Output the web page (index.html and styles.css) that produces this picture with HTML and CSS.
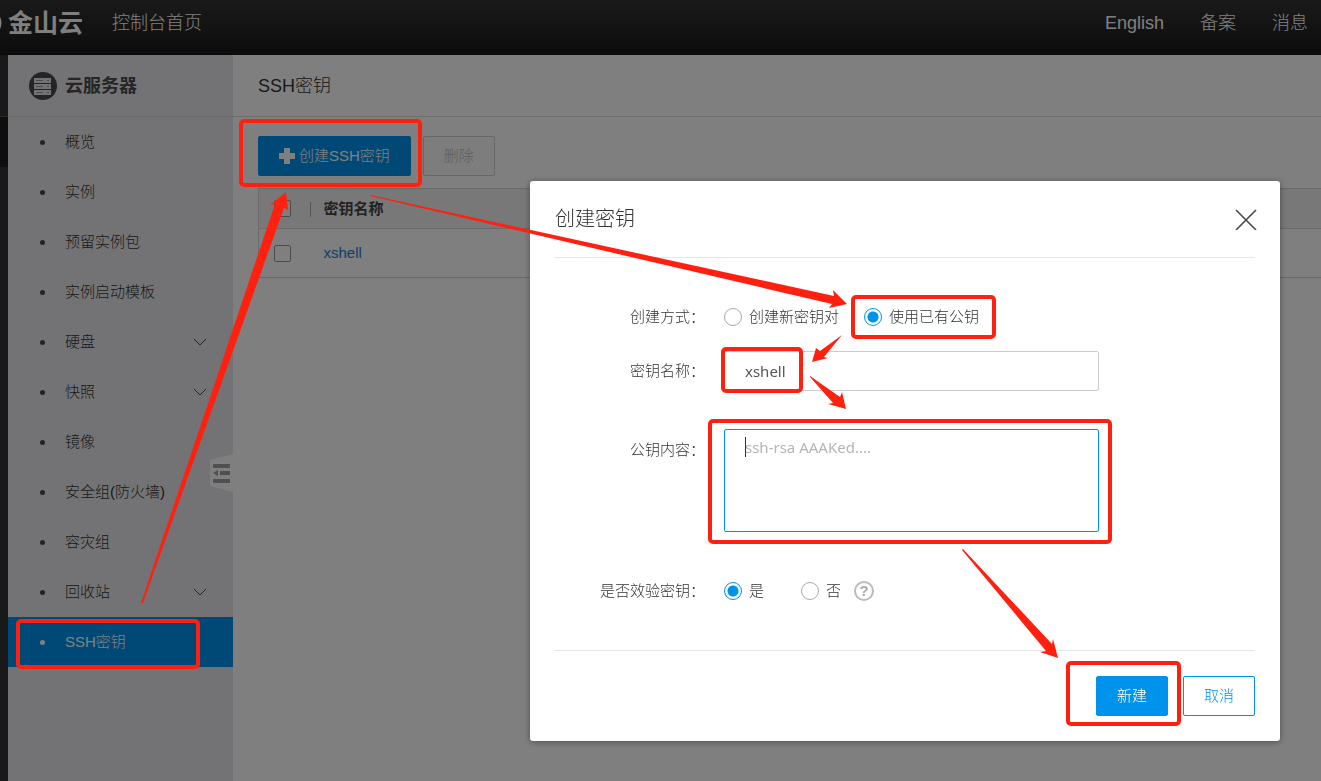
FILE: index.html
```html
<!DOCTYPE html>
<html lang="zh-CN">
<head>
  <meta charset="utf-8">
  <title>SSH密钥 - 金山云控制台</title>
  <meta name="viewport" content="width=device-width, initial-scale=1.0">
  <link rel="stylesheet" href="styles.css">
</head>
<body>
  <header class="topbar">
    <svg class="logo-ring" width="4" height="30" viewBox="0 0 4 30">
      <circle cx="-12" cy="15" r="12" fill="none" stroke="#fff" stroke-width="3"/>
    </svg>
    <a class="logo" href="#">金山云</a>
    <a class="home" href="#">控制台首页</a>
    <nav class="topnav">
      <a href="#">English</a>
      <a href="#">备案</a>
      <a href="#">消息</a>
    </nav>
  </header>

  <div class="layout">
    <div class="rail">
      <div class="rail-top"></div>
      <div class="rail-item"></div>
    </div>

    <aside class="sidebar">
      <div class="sidebar-title">
        <svg width="28" height="28" viewBox="0 0 28 28">
          <circle cx="14" cy="14" r="14" fill="#4a4a4a"/>
          <g fill="#e6e6ea">
            <rect x="5" y="6" width="17" height="5"/>
            <rect x="5" y="12" width="17" height="5"/>
            <rect x="5" y="18" width="17" height="5"/>
          </g>
          <path d="M7 8.500h7M18 8.500h2M7 14.500h7M18 14.500h2M7 20.500h7M18 20.500h2" stroke="#999"/>
        </svg>
        <h2>云服务器</h2>
      </div>
      <ul class="menu">
        <li><a href="#">概览</a></li>
        <li><a href="#">实例</a></li>
        <li><a href="#">预留实例包</a></li>
        <li><a href="#">实例启动模板</a></li>
        <li><a href="#">硬盘<svg class="arrow" width="14" height="8" viewBox="0 0 14 8"><path d="M1 1l6 6 6-6"/></svg></a></li>
        <li><a href="#">快照<svg class="arrow" width="14" height="8" viewBox="0 0 14 8"><path d="M1 1l6 6 6-6"/></svg></a></li>
        <li><a href="#">镜像</a></li>
        <li><a href="#">安全组(防火墙)</a></li>
        <li><a href="#">容灾组</a></li>
        <li><a href="#">回收站<svg class="arrow" width="14" height="8" viewBox="0 0 14 8"><path d="M1 1l6 6 6-6"/></svg></a></li>
        <li><a class="active" href="#">SSH密钥</a></li>
      </ul>
      <button class="collapse" type="button" aria-label="收起菜单">
        <svg width="23" height="38" viewBox="0 0 23 38">
          <path d="M0 6L23 0v38L0 32z" fill="#fff"/>
          <path d="M3 10h17v4H3zM10 17h10v4H10zM3 25h17v4H3zM3 19l5-3v6z" fill="#a0a0a0"/>
        </svg>
      </button>
    </aside>

    <main class="main">
      <h1>SSH密钥</h1>
      <div class="content">
        <div class="toolbar">
          <button class="btn primary create" type="button">
            <svg width="16" height="16" viewBox="0 0 16 16"><path d="M5 0h6v5h5v6h-5v5H5v-5H0V5h5z" fill="#fff"/></svg>
            创建SSH密钥
          </button>
          <button class="btn" type="button" disabled>删除</button>
        </div>
        <table class="keys">
          <thead>
            <tr>
              <th class="check"><input type="checkbox" aria-label="全选"></th>
              <th><span class="split"></span>密钥名称</th>
            </tr>
          </thead>
          <tbody>
            <tr>
              <td class="check"><input type="checkbox" aria-label="选择 xshell"></td>
              <td class="name"><a href="#">xshell</a></td>
            </tr>
          </tbody>
        </table>
      </div>
    </main>
  </div>

  <div class="mask">
    <form class="dialog" role="dialog" aria-labelledby="dialogTitle">
      <div class="dialog-head">
        <h3 id="dialogTitle">创建密钥</h3>
        <button class="close" type="button" aria-label="关闭">
          <svg width="22" height="22" viewBox="0 0 22 22"><path d="M1 2l20 20M21 2L1 22" stroke="#4a4a4a" stroke-width="1.600"/></svg>
        </button>
      </div>

      <div class="dialog-body">
        <div class="row">
          <span class="label">创建方式：</span>
          <label class="radio"><input type="radio" name="mode">创建新密钥对</label>
          <label class="radio"><input type="radio" name="mode" checked>使用已有公钥</label>
        </div>
        <div class="row">
          <label class="label" for="keyName">密钥名称：</label>
          <input class="field" id="keyName" type="text" value="xshell">
        </div>
        <div class="row row-area">
          <label class="label" for="keyContent">公钥内容：</label>
          <div class="area">
            <textarea class="field" id="keyContent" placeholder="ssh-rsa AAAKed...."></textarea>
          </div>
        </div>
        <div class="row row-verify">
          <span class="label">是否效验密钥：</span>
          <label class="radio"><input type="radio" name="verify" checked>是</label>
          <label class="radio"><input type="radio" name="verify">否</label>
          <button class="help" type="button">?</button>
        </div>
      </div>

      <div class="dialog-foot">
        <button class="btn primary" type="button">新建</button>
        <button class="btn ghost" type="button">取消</button>
      </div>
    </form>
  </div>

  <!-- 操作步骤标注 -->
  <svg class="marks" width="1321" height="781" viewBox="0 0 1321 781">
    <g fill="none" stroke="#ff2010" stroke-width="4">
      <rect x="18" y="621" width="180" height="46" rx="3"/>
      <rect x="241" y="121" width="179" height="64" rx="3"/>
      <rect x="853" y="297" width="141" height="40" rx="3"/>
      <rect x="723" y="349" width="78" height="42" rx="3"/>
      <rect x="710" y="421" width="400" height="121" rx="3"/>
      <rect x="1068" y="663" width="111" height="61" rx="3"/>
    </g>
    <g fill="#ff2010">
      <path d="M141 603L275 204l-5 1 16-13 2 18-4-2L143 603z"/>
      <path d="M370 195L834 296l-1-6 14 14-18 4 3-4L370 196z"/>
      <path d="M842 335l-18 22 4 1-16 4 4-14 4 3 22-16z"/>
      <path d="M810 376l30 21 2-5 4 17-18-5 5-1-23-26z"/>
      <path d="M963 549l89 95 1-5 5 19-18-6 6-1-84-101z"/>
    </g>
  </svg>
</body>
</html>
```
FILE: styles.css
```css
* {
  box-sizing: border-box;
}
body {
  margin: 0;
  min-height: 100vh;
  display: flex;
  flex-direction: column;
  font-family: "Liberation Sans", "Noto Sans CJK SC", sans-serif;
  font-size: 15px;
  font-weight: 300;
  line-height: 20px;
  color: #333;
  background: #fff;
}
h1, h2, h3, ul {
  margin: 0;
  padding: 0;
}
a {
  text-decoration: none;
}
button, input, textarea {
  font: inherit;
}
button {
  padding: 0;
  border: none;
  background: none;
  cursor: pointer;
}
svg {
  display: block;
}

/* 顶部 */
.topbar {
  display: flex;
  align-items: center;
  height: 55px;
  padding: 0 13px 10px 0;
  background: linear-gradient(to bottom, #343434, #181818);
  font-size: 18px;
}
.topbar a {
  color: #fff;
}
.topbar .logo {
  margin-left: 4px;
  font-size: 25px;
  line-height: 30px;
  font-weight: 700;
}
.home {
  margin-left: 29px;
}
.topnav {
  display: flex;
  gap: 36px;
  margin-left: auto;
}

.layout {
  display: flex;
  flex: 1;
}
.rail {
  width: 8px;
  background: #333;
}
.rail-top {
  height: 62px;
  border-bottom: 1px solid #555;
}
.rail-item {
  height: 50px;
  background: #1c1c1c;
}

/* 侧边栏 */
.sidebar {
  position: relative;
  width: 225px;
  background: #e6e6ea;
}
.sidebar-title {
  display: flex;
  align-items: center;
  gap: 8px;
  height: 62px;
  padding-left: 21px;
  border-bottom: 1px solid #cfcfcf;
}
.sidebar-title h2 {
  font-size: 18px;
  font-weight: 700;
  color: #4a4a4a;
}
.menu {
  list-style: none;
}
.menu a {
  display: flex;
  align-items: center;
  height: 50px;
  padding: 0 26px 0 32px;
  color: #333;
}
.menu a::before {
  content: "";
  width: 5px;
  height: 5px;
  margin-right: 20px;
  border-radius: 50%;
  background: #444;
}
.menu .active {
  background: #0093ec;
  color: #fff;
}
.menu .active::before {
  background: #fff;
}
.arrow {
  margin-left: auto;
  fill: none;
  stroke: #444;
}
.collapse {
  position: absolute;
  top: 399px;
  right: 0;
}

/* 主内容 */
.main {
  flex: 1;
}
.main h1 {
  height: 62px;
  padding-left: 25px;
  border-bottom: 1px solid #dcdcdc;
  font-size: 18px;
  font-weight: 300;
  line-height: 63px;
}
.content {
  padding: 19px 0 0 25px;
}
.toolbar {
  display: flex;
  gap: 12px;
  margin-bottom: 12px;
}
.btn {
  height: 40px;
  padding: 0 20px;
  border: 1px solid #ccc;
  border-radius: 2px;
  background: #fff;
}
.btn:disabled {
  background: #fafafa;
  color: #bbb;
}
.btn.primary {
  border-color: #0093ec;
  background: #0093ec;
  color: #fff;
}
.btn.ghost {
  border-color: #0093ec;
  color: #0093ec;
}
.btn.create {
  display: flex;
  align-items: center;
  gap: 4px;
}
.keys {
  width: 100%;
  border-collapse: collapse;
  border-left: 1px solid #d5d5d5;
  text-align: left;
}
.keys th, .keys td {
  padding: 0;
  border-top: 1px solid #d5d5d5;
  border-bottom: 1px solid #d5d5d5;
}
.keys th {
  height: 40px;
  background: #f0f0f3;
  font-weight: 700;
  color: #444;
}
.keys td {
  height: 49px;
}
.keys .check {
  width: 51px;
  padding-left: 15px;
}
.keys .name {
  padding-left: 14px;
}
.keys a {
  color: #1b7fcf;
}
.split {
  display: inline-block;
  width: 1px;
  height: 15px;
  margin-right: 13px;
  background: #aaa;
  vertical-align: middle;
}
input[type="checkbox"] {
  appearance: none;
  display: block;
  width: 17px;
  height: 17px;
  margin: 0;
  border: 1px solid #999;
  border-radius: 2px;
  background: #fff;
}

/* 弹窗 */
.mask {
  position: fixed;
  inset: 0;
  display: flex;
  align-items: flex-start;
  justify-content: flex-end;
  padding: 181px 41px 0 0;
  background: rgba(0, 0, 0, 0.5);
}
.dialog {
  width: 750px;
  padding: 0 25px 25px;
  border-radius: 3px;
  background: #fff;
  box-shadow: 0 1px 6px rgba(0, 0, 0, 0.4);
}
.dialog-head {
  display: flex;
  align-items: center;
  justify-content: space-between;
  height: 77px;
  border-bottom: 1px solid #e6e6e6;
}
.dialog-head h3 {
  font-size: 20px;
  font-weight: 300;
}
.close {
  margin-right: -2px;
}
.dialog-body {
  display: flex;
  flex-direction: column;
  padding: 39px 0;
}
.row {
  display: flex;
  align-items: center;
  min-height: 40px;
  margin-bottom: 14px;
}
.label {
  width: 150px;
  margin-right: 19px;
  text-align: right;
}
.radio {
  display: flex;
  align-items: center;
  gap: 7px;
  margin-right: 25px;
}
.radio input {
  appearance: none;
  width: 18px;
  height: 18px;
  margin: 0;
  border: 1px solid #aaa;
  border-radius: 50%;
}
.radio input:checked {
  border-color: #0093ec;
  background: radial-gradient(circle, #0093ec 5px, #fff 6px);
}
.field {
  display: block;
  width: 375px;
  height: 40px;
  padding: 0 20px;
  border: 1px solid #ccc;
  border-radius: 2px;
  outline: none;
  background: #fff;
  font-family: "Noto Sans", "Noto Sans CJK SC", sans-serif;
  font-weight: 400;
  color: #555;
}
.row-area {
  align-items: flex-start;
  margin: 24px 0 39px;
}
.row-area .label {
  padding-top: 11px;
}
.area {
  position: relative;
}
.area .field {
  height: 103px;
  padding: 7px 20px;
  border-color: #0093ec;
  resize: none;
}
/* 输入光标 */
.area::before {
  content: "";
  position: absolute;
  top: 8px;
  left: 21px;
  width: 1px;
  height: 20px;
  background: #333;
}
.field::placeholder {
  color: #b5b5b5;
}
.row-verify {
  margin-bottom: 0;
}
.row-verify .radio + .radio {
  margin: 0 13px 0 12px;
}
.help {
  width: 20px;
  height: 20px;
  border: 2px solid #bbb;
  border-radius: 50%;
  font-weight: 700;
  line-height: 16px;
  color: #aaa;
}
.dialog-foot {
  display: flex;
  justify-content: flex-end;
  gap: 15px;
  padding-top: 25px;
  border-top: 1px solid #e6e6e6;
}

.marks {
  position: absolute;
  top: 0;
  left: 0;
  pointer-events: none;
}
```
